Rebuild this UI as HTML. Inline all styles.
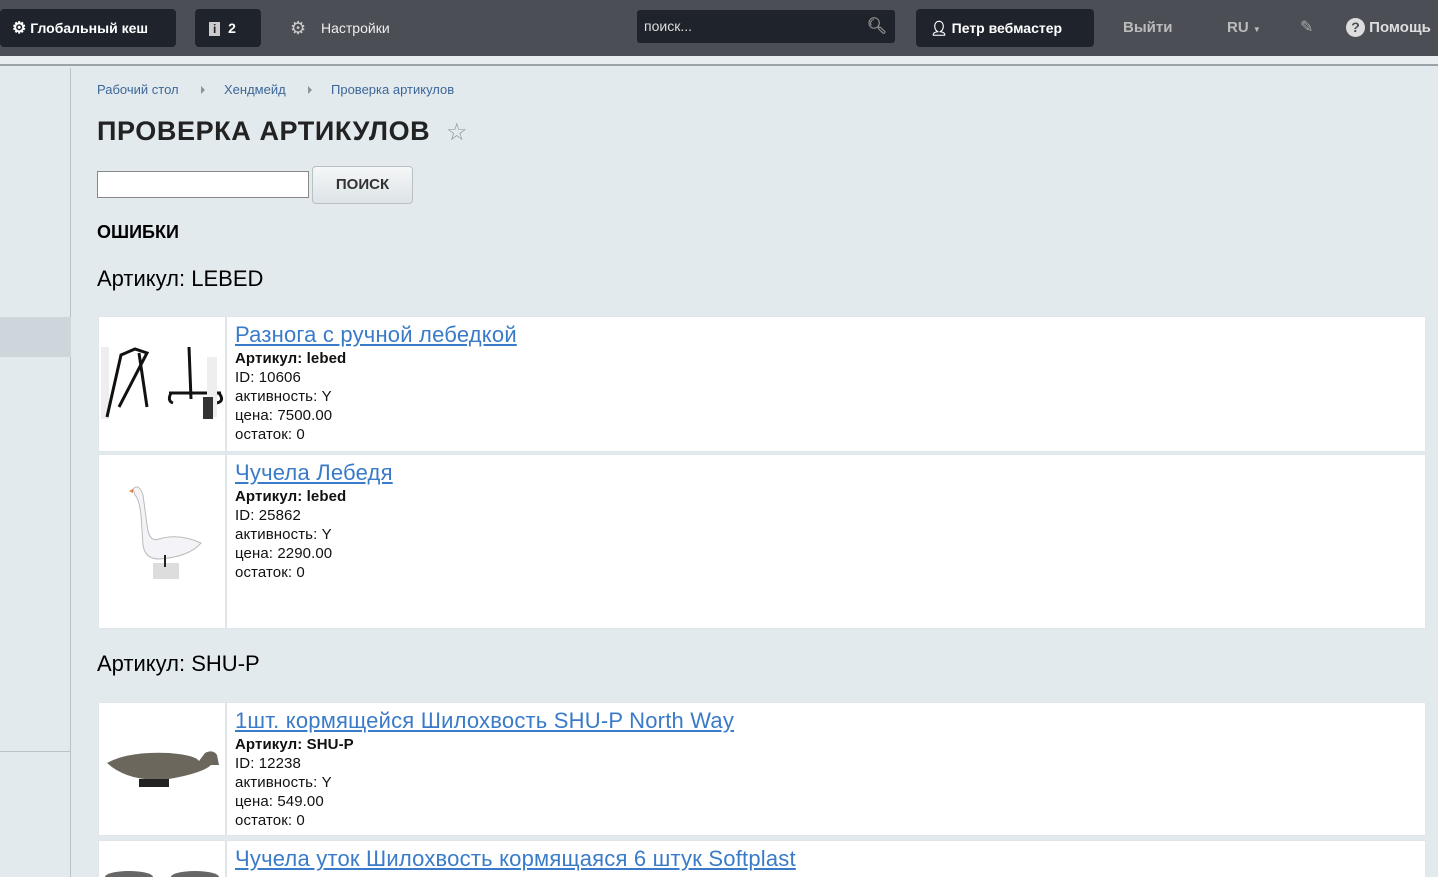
<!DOCTYPE html>
<html><head><meta charset="utf-8"><style>
*{box-sizing:border-box;margin:0;padding:0}
html,body{width:1438px;height:877px;overflow:hidden}
body{background:#e3eaee;font-family:"Liberation Sans",Arial,sans-serif;position:relative}
.hdr{position:absolute;left:0;top:0;width:1438px;height:56px;background:#4b4f55}
.strip{position:absolute;left:0;top:56px;width:1438px;height:10px;background:#e8eef0;border-bottom:2px solid #9aa3a8}
.btn{position:absolute;top:9px;height:38px;background:#1f242c;border-radius:4px;color:#fff;font-weight:bold;font-size:14px;line-height:38px;padding-left:12px}
.lt{position:absolute;top:0;line-height:56px;font-size:14px;color:#eee}
.side{position:absolute;left:0;top:68px;width:71px;height:809px;border-right:1px solid #b9c4c9}
.bc{position:absolute;top:82px;font-size:13px;color:#3c6798}
.tri{position:absolute;top:86px;width:0;height:0;border-left:4px solid #8a959b;border-top:4px solid transparent;border-bottom:4px solid transparent}
.card{position:absolute;left:98px;width:1328px;background:#fff;border:1px solid #dfe5e8}
.img{position:absolute;left:0;top:0;width:128px;height:100%;border-right:2px solid #dfe5e8}
.info{position:absolute;left:136px;top:4px;font-size:15px;line-height:19px;color:#111;letter-spacing:0.1px}
.info a{font-size:22px;line-height:28px;display:block;color:#3a7bc9;text-decoration:underline;letter-spacing:0.2px}
</style></head><body>
<div class="hdr"></div>
<div class="btn" style="left:0;width:176px"><span style="font-size:16px">⚙</span> Глобальный кеш</div>
<div class="btn" style="left:195px;width:66px;padding-left:14px"><span style="background:#ccc;color:#1f242c;padding:0 4px;font-size:12px">i</span>&nbsp; 2</div>
<div class="lt" style="left:290px;color:#ccc;font-size:18px">⚙</div>
<div class="lt" style="left:321px">Настройки</div>
<div style="position:absolute;left:637px;top:10px;width:258px;height:33px;background:#1f242c;border-radius:3px;color:#ddd;font-size:14px;line-height:33px;padding-left:7px">поиск...<span style="position:absolute;right:8px;top:0;color:#888;font-size:16px;font-weight:bold">&#x1F50D;&#xFE0E;</span></div>
<div class="btn" style="left:916px;width:178px;padding-left:14px">👤&#xFE0E; Петр вебмастер</div>
<div class="lt" style="left:1123px;color:#bbb;font-weight:bold;font-size:15px">Выйти</div>
<div class="lt" style="left:1227px;color:#bbb;font-weight:bold;font-size:15px">RU <span style="font-size:8px">▼</span></div>
<div class="lt" style="left:1300px;color:#aaa;font-size:16px">✎</div>
<div class="lt" style="left:1346px;color:#ddd;font-weight:bold;font-size:15px"><span style="display:inline-block;width:19px;height:19px;border-radius:50%;background:#ddd;color:#4b4f55;text-align:center;line-height:19px;font-size:14px">?</span> Помощь</div>
<div class="strip"></div>
<div class="side"><div style="position:absolute;top:249px;width:71px;height:40px;background:#cdd6da"></div><div style="position:absolute;top:683px;width:71px;border-top:1px solid #b9c4c9"></div></div>
<div class="bc" style="left:97px">Рабочий стол</div><div class="tri" style="left:201px"></div>
<div class="bc" style="left:224px">Хендмейд</div><div class="tri" style="left:308px"></div>
<div class="bc" style="left:331px">Проверка артикулов</div>
<div style="position:absolute;left:97px;top:116px;font-size:27px;font-weight:bold;color:#222;letter-spacing:0.6px">ПРОВЕРКА АРТИКУЛОВ</div>
<div style="position:absolute;left:446px;top:118px;font-size:24px;color:#8a959b">☆</div>
<div style="position:absolute;left:97px;top:171px;width:212px;height:27px;background:#fff;border:1px solid #888"></div>
<div style="position:absolute;left:312px;top:166px;width:101px;height:38px;background:linear-gradient(#f5f7f8,#dde3e6);border:1px solid #b8c0c4;border-radius:4px;text-align:center;line-height:36px;font-weight:bold;font-size:15px;color:#333">ПОИСК</div>
<div style="position:absolute;left:97px;top:222px;font-weight:bold;font-size:18px;color:#000">ОШИБКИ</div>
<div style="position:absolute;left:97px;top:266px;font-size:22px;color:#000">Артикул: LEBED</div>
<div class="card" style="top:316px;height:136px"><div class="img"><svg width="128" height="134"><rect x="2" y="30" width="8" height="72" fill="#eee"/><path d="M8 100 L22 38 L36 32 L48 36 L20 90 M40 36 L48 90 M90 30 L92 82 M70 76 L122 76 M72 76 Q68 84 74 86 M120 76 Q126 84 118 86" stroke="#111" stroke-width="3" fill="none"/><rect x="108" y="40" width="10" height="60" fill="#eee"/><rect x="104" y="80" width="10" height="22" fill="#333"/></svg></div><div class="info"><a>Разнога с ручной лебедкой</a><b>Артикул: lebed</b><br>ID: 10606<br>активность: Y<br>цена: 7500.00<br>остаток: 0</div></div>
<div class="card" style="top:454px;height:175px"><div class="img"><svg width="128" height="173"><path d="M34 34 Q40 28 44 40 L48 70 Q50 88 60 84 Q80 78 102 88 Q90 102 60 104 Q46 104 44 90 L42 60 Q40 44 36 40Z" fill="#f4f4f8" stroke="#bbb"/><path d="M34 34 L30 36 L34 38Z" fill="#e08040"/><rect x="54" y="108" width="26" height="16" fill="#ddd"/><line x1="66" y1="100" x2="66" y2="112" stroke="#222" stroke-width="2"/></svg></div><div class="info"><a>Чучела Лебедя</a><b>Артикул: lebed</b><br>ID: 25862<br>активность: Y<br>цена: 2290.00<br>остаток: 0</div></div>
<div style="position:absolute;left:97px;top:651px;font-size:22px;color:#000">Артикул: SHU-P</div>
<div class="card" style="top:702px;height:134px"><div class="img"><svg width="128" height="132"><path d="M8 60 Q30 48 70 50 Q96 52 100 58 L106 50 Q114 46 118 52 L120 62 L112 62 Q104 70 70 76 Q30 80 8 60Z" fill="#6b675d"/><rect x="40" y="76" width="30" height="8" fill="#222"/></svg></div><div class="info"><a>1шт. кормящейся Шилохвость SHU-P North Way</a><b>Артикул: SHU-P</b><br>ID: 12238<br>активность: Y<br>цена: 549.00<br>остаток: 0</div></div>
<div class="card" style="top:840px;height:60px"><div class="img"><svg width="128" height="40"><ellipse cx="30" cy="36" rx="24" ry="6" fill="#666"/><ellipse cx="96" cy="36" rx="24" ry="6" fill="#666"/></svg></div><div class="info"><a>Чучела уток Шилохвость кормящаяся 6 штук Softplast</a></div></div>
</body></html>
